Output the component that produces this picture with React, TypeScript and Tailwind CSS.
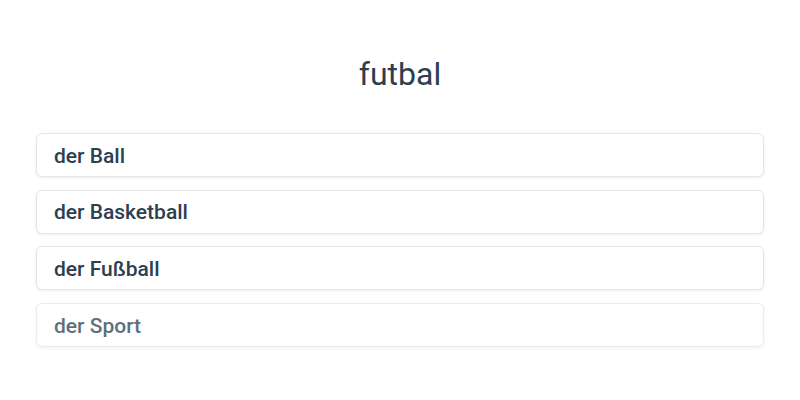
import React from 'react';

const options = ['der Ball', 'der Basketball', 'der Fußball', 'der Sport'];

const App: React.FC = () => {
  return (
    <div className="min-h-[400px] w-[800px] bg-white text-[#2c3e50]" style={{ fontFamily: 'Roboto, "Noto Sans", sans-serif' }}>
      <div className="px-9 pt-[50px]">
        <h1 className="text-center text-[32px] font-normal leading-[48px]">futbal</h1>
        <div className="mt-[35px] flex flex-col gap-[12.7px]">
          {options.map((option, index) => (
            <div
              key={option}
              className={`flex h-[44px] items-center rounded-md border border-[#e5e5e5] bg-white px-[17px] pt-[3px] text-[21px] font-medium shadow-[0_1px_3px_rgba(0,0,0,0.08)] ${index === 3 ? 'opacity-75' : ''}`}
            >
              {option}
            </div>
          ))}
        </div>
      </div>
    </div>
  );
};

export default App;
